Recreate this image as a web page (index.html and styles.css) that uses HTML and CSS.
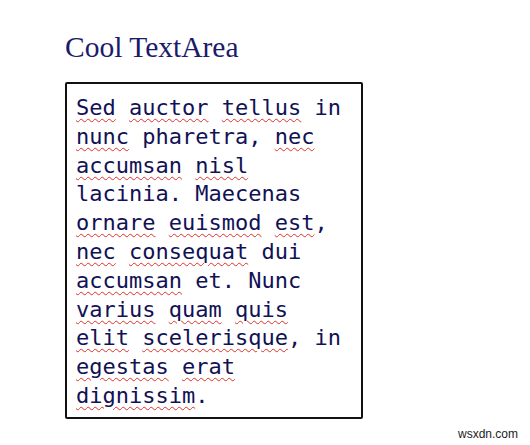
FILE: index.html
```html
<!DOCTYPE html>
<html lang="en">
<head>
<meta charset="utf-8">
<title>Cool TextArea</title>
<link rel="stylesheet" href="styles.css">
</head>
<body>
<main class="page">
  <h1 class="title">Cool TextArea</h1>
  <div class="textarea" contenteditable="true" spellcheck="false"><span class="sp">Sed</span> <span class="sp">auctor</span> <span class="sp">tellus</span> in <span class="sp">nunc</span> pharetra, <span class="sp">nec</span> <span class="sp">accumsan</span> <span class="sp">nisl</span> lacinia. Maecenas <span class="sp">ornare</span> <span class="sp">euismod</span> <span class="sp">est</span>, <span class="sp">nec</span> <span class="sp">consequat</span> dui <span class="sp">accumsan</span> et. Nunc <span class="sp">varius</span> <span class="sp">quam</span> <span class="sp">quis</span> <span class="sp">elit</span> <span class="sp">scelerisque</span>, in <span class="sp">egestas</span> <span class="sp">erat</span> <span class="sp">dignissim</span>.</div>
</main>
<div class="watermark">wsxdn.com</div>
</body>
</html>
```
FILE: styles.css
```css
html, body {
  margin: 0;
  padding: 0;
  background: #ffffff;
}

.page {
  padding: 31px 0 0 65px;
}

.title {
  margin: 0 0 18px 0;
  font-family: "Liberation Serif", "Times New Roman", serif;
  font-weight: normal;
  font-size: 29.5px;
  line-height: 33px;
  color: #1b1b6b;
}

.textarea {
  box-sizing: content-box;
  width: 21ch;
  padding: 10px 7px 6px 9px;
  border: 2px solid #111111;
  border-radius: 2px;
  font-family: "DejaVu Sans Mono", "Liberation Mono", monospace;
  font-size: 22px;
  line-height: 28.8px;
  color: #111155;
  outline: none;
  word-wrap: break-word;
}

.sp {
  text-decoration: underline wavy #e0302a;
  text-decoration-thickness: 1px;
  text-underline-offset: 3px;
}

.watermark {
  position: absolute;
  right: 12px;
  bottom: 4px;
  font-family: "Liberation Sans", Arial, sans-serif;
  font-size: 12px;
  color: #222222;
}
```
